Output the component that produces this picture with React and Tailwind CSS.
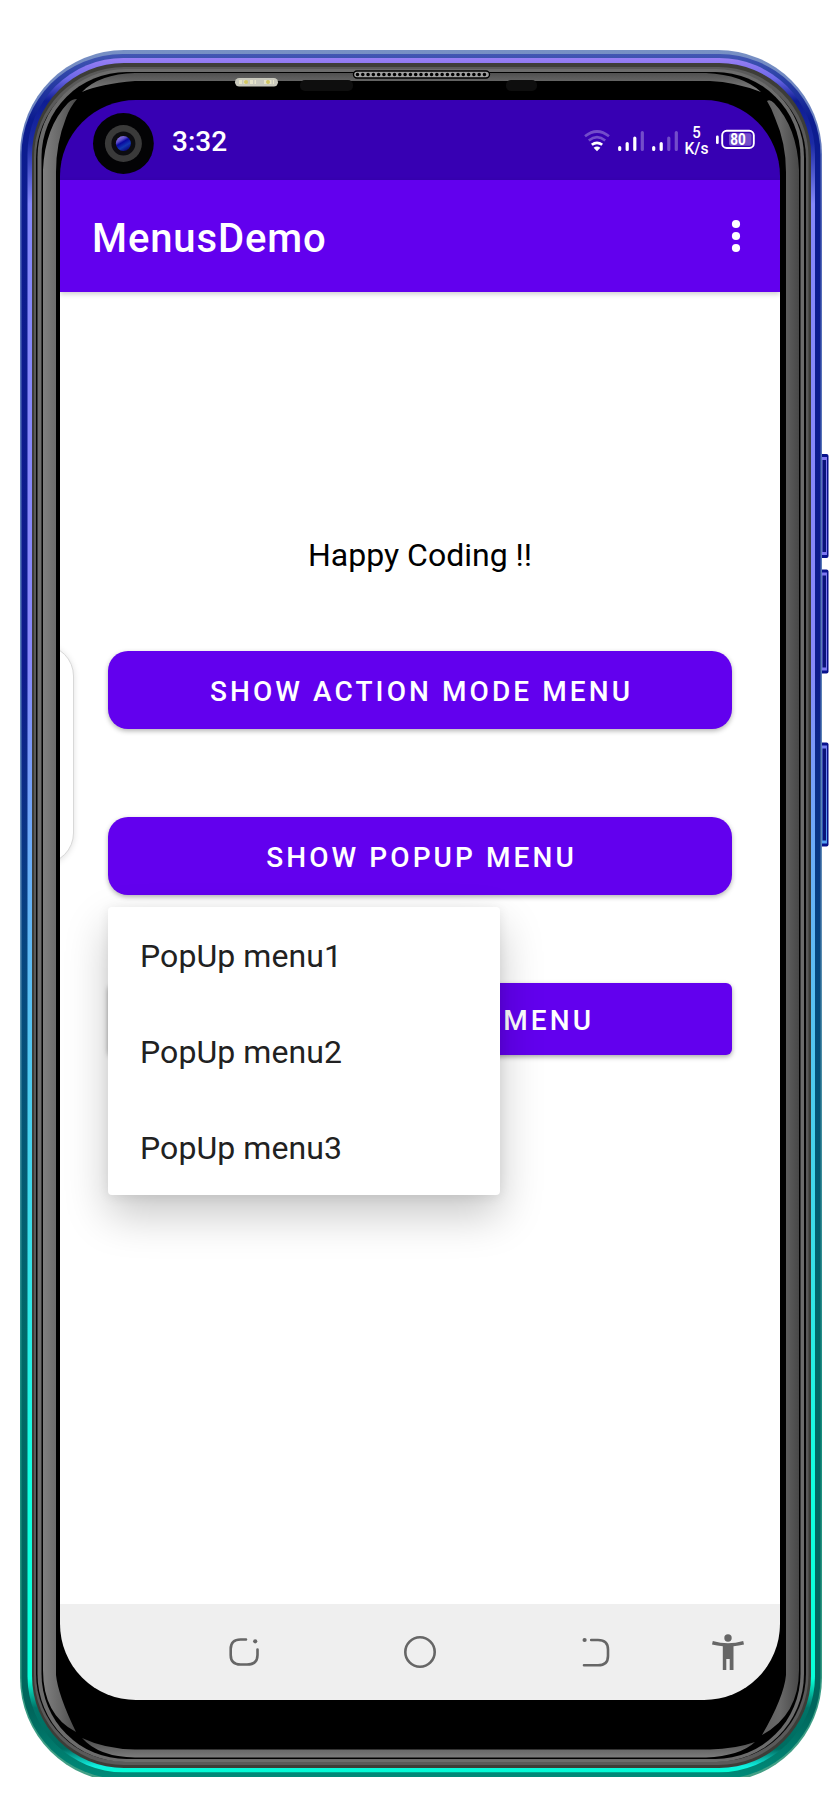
const rings = [
  { l: 20, t: 50, r: 822, b: 1782, rx: 104, fill: 'url(#edge)' },
  { l: 21.5, t: 54, r: 820.5, b: 1779, rx: 101, fill: 'url(#body)' },
  { l: 27.5, t: 58, r: 815, b: 1772.3, rx: 96, fill: 'url(#shine)' },
  { l: 32, t: 63, r: 811, b: 1768, rx: 92, fill: '#3d3d38' },
  { l: 34, t: 67, r: 808.5, b: 1765, rx: 90, fill: '#5a5a5a' },
  { l: 36, t: 71, r: 806, b: 1761.5, rx: 88, fill: '#050505' },
  { l: 37.5, t: 69, r: 804, b: 1762, rx: 88, fill: '#6c6c6c' },
  { l: 41.5, t: 72, r: 800.5, b: 1759, rx: 85, fill: '#000' },
]

function Frame() {
  return (
    <svg className="absolute left-0 top-0" width="840" height="1800" viewBox="0 0 840 1800" aria-hidden="true">
      <defs>
        <linearGradient id="edge" gradientUnits="userSpaceOnUse" x1="0" y1="50" x2="0" y2="1780">
          <stop offset="0" stopColor="#7890c4" />
          <stop offset="0.1" stopColor="#5268b8" />
          <stop offset="0.5" stopColor="#5c8ab4" />
          <stop offset="0.8" stopColor="#148c7c" />
          <stop offset="1" stopColor="#44a086" />
        </linearGradient>
        <linearGradient id="body" gradientUnits="userSpaceOnUse" x1="0" y1="50" x2="0" y2="1780">
          <stop offset="0" stopColor="#4659b5" />
          <stop offset="0.012" stopColor="#3148aa" />
          <stop offset="0.04" stopColor="#0c1c90" />
          <stop offset="0.36" stopColor="#0e1b8c" />
          <stop offset="0.52" stopColor="#064680" />
          <stop offset="0.75" stopColor="#006a68" />
          <stop offset="0.96" stopColor="#00665c" />
          <stop offset="1" stopColor="#008c7a" />
        </linearGradient>
        <linearGradient id="shine" gradientUnits="userSpaceOnUse" x1="0" y1="58" x2="0" y2="1773">
          <stop offset="0" stopColor="#9a80f5" />
          <stop offset="0.012" stopColor="#6c68e8" />
          <stop offset="0.025" stopColor="#0e1d94" />
          <stop offset="0.05" stopColor="#1c2ba5" />
          <stop offset="0.085" stopColor="#8488fa" />
          <stop offset="0.35" stopColor="#8888fa" />
          <stop offset="0.46" stopColor="#6cacf8" />
          <stop offset="0.7" stopColor="#38e0e8" />
          <stop offset="0.83" stopColor="#12ffe0" />
          <stop offset="0.945" stopColor="#08ffd8" />
          <stop offset="0.962" stopColor="#007468" />
          <stop offset="0.986" stopColor="#006c60" />
          <stop offset="0.996" stopColor="#10efe0" />
          <stop offset="1" stopColor="#00ffd0" />
        </linearGradient>
        <linearGradient id="gl" x1="0" x2="1">
          <stop offset="0" stopColor="#808080" />
          <stop offset="0.5" stopColor="#686868" />
          <stop offset="1" stopColor="#484848" />
        </linearGradient>
        <linearGradient id="gr" x1="1" x2="0">
          <stop offset="0" stopColor="#484848" />
          <stop offset="0.5" stopColor="#686868" />
          <stop offset="1" stopColor="#606060" />
        </linearGradient>
        <linearGradient id="gt" x1="0" x2="0" y1="0" y2="1">
          <stop offset="0" stopColor="#505050" />
          <stop offset="1" stopColor="#808080" />
        </linearGradient>
        <linearGradient id="gb" x1="0" x2="0" y1="1" y2="0">
          <stop offset="0" stopColor="#7c7c7c" />
          <stop offset="1" stopColor="#484848" />
        </linearGradient>
        <linearGradient id="key" gradientUnits="userSpaceOnUse" x1="0" y1="454" x2="0" y2="848">
          <stop offset="0" stopColor="#8078f0" />
          <stop offset="0.7" stopColor="#7878f0" />
          <stop offset="1" stopColor="#50a0f0" />
        </linearGradient>
        <linearGradient id="lens" x1="0" x2="0.6" y1="0" y2="1">
          <stop offset="0" stopColor="#a68fe8" />
          <stop offset="0.35" stopColor="#5c4cc8" />
          <stop offset="0.5" stopColor="#0808a0" />
          <stop offset="0.75" stopColor="#1238b0" />
          <stop offset="1" stopColor="#0a0a80" />
        </linearGradient>
        <clipPath id="cut"><rect x="0" y="50" width="840" height="1727" /></clipPath>
      </defs>

      {[454, 569.5, 742.5].map((y) => (
        <g key={y}>
          <rect x="820" y={y} width="8.5" height="104" rx="2" fill="#08128c" />
          <rect x="822" y={y + 3} width="5" height="98" fill="url(#key)" />
          <rect x="822.5" y={y + 6} width="3.5" height="92" fill="#0a1478" />
        </g>
      ))}

      <g clipPath="url(#cut)">
        {rings.map((s, i) => (
          <rect key={i} x={s.l} y={s.t} width={s.r - s.l} height={s.b - s.t} rx={s.rx} fill={s.fill} />
        ))}
      </g>

      <path d="M43 170Q45 127 68 103Q72 99 77 99Q70 107 66 118Q56 143 56 172V1675Q58 1695 76 1732Q43 1715 43 1670Z" fill="url(#gl)" />
      <path d="M799 170Q797 127 774 103Q770 99 767 101Q772 109 775 118Q786 143 786 172V1675Q784 1697 762 1735Q799 1715 799 1670Z" fill="url(#gr)" />
      <path d="M82 92Q99 74 135 73H706Q743 75 761 92Q735 82 710 81H135Q100 84 82 92Z" fill="url(#gt)" />
      <path d="M82 1738Q99 1757 135 1757.500H706Q740 1756 755 1742Q735 1749 710 1749.500H135Q105 1749 82 1738Z" fill="url(#gb)" />

      <rect x="300" y="80" width="53" height="11" rx="5" fill="#0e0e0e" />
      <rect x="506" y="80" width="31" height="11" rx="5" fill="#0e0e0e" />
      <rect x="353.500" y="71" width="136" height="7" rx="3.500" fill="#a0a0a0" stroke="#000" strokeWidth="1.400" />
      <path d="M357.500 74.500H487" stroke="#000" strokeWidth="3.600" strokeLinecap="round" strokeDasharray="0 5.290" />
      <rect x="235" y="78" width="43" height="8.500" rx="4.200" fill="#c9c9bd" />
      <path d="M239 82h8m3 0h6m8 0h10" stroke="#e6e4ca" strokeWidth="4" strokeDasharray="3 1.500" />
      <circle cx="246" cy="82" r="2" fill="#d2c764" />
      <circle cx="268" cy="82" r="2" fill="#d2c764" />
    </svg>
  )
}

function Camera() {
  return (
    <svg width="62" height="62" viewBox="0 0 62 62" className="shrink-0">
      <circle cx="31.400" cy="30.500" r="30.400" fill="#030305" />
      <circle cx="31.400" cy="30.500" r="18.500" fill="#3a3a3a" />
      <circle cx="31.400" cy="30.500" r="12" fill="#0c0c10" />
      <circle cx="31.400" cy="30.500" r="7.500" fill="url(#lens)" />
    </svg>
  )
}

function StatusIcons() {
  return (
    <svg width="176" height="40" viewBox="0 0 176 40" className="shrink-0">
      <g fill="none" stroke="#fff" strokeWidth="2.700">
        <path d="M5 16.300Q17 6.700 29 16.300" opacity="0.300" />
        <path d="M8.800 20.500Q17 13.800 25.200 20.500" opacity="0.300" />
        <path d="M11.800 24.800Q17 20.800 22.200 24.800" />
      </g>
      <path d="M13.600 27.700Q17 25.300 20.400 27.700L17 31.200Z" fill="#fff" />
      <g stroke="#fff" strokeWidth="3.200" strokeLinecap="round">
        <path d="M39.700 27.500v2M47.200 23.500v6M54.800 18v11.500M73.700 27.500v2M81.200 23.500v6" />
        <path d="M62.300 12.500v17M88.800 18v11.500M96.300 12.500v17" opacity="0.300" />
      </g>
      <g fill="#fff" fontFamily="Roboto, sans-serif" textAnchor="middle">
        <text x="116.500" y="18" fontSize="16.500" fontWeight="500" textLength="8.500" lengthAdjust="spacingAndGlyphs">5</text>
        <text x="116.500" y="34" fontSize="16.500" fontWeight="500" textLength="24" lengthAdjust="spacingAndGlyphs">K/s</text>
      </g>
      <rect x="136" y="15.500" width="2.700" height="8.500" rx="1.300" fill="#fff" />
      <rect x="142.200" y="10.800" width="31.600" height="17.200" rx="4.500" fill="none" stroke="#fff" strokeWidth="1.900" />
      <rect x="149" y="13.200" width="22.500" height="12.500" rx="2" fill="#fff" opacity="0.300" />
      <text x="158" y="25.300" fontSize="16.500" fontWeight="700" fill="#fff" fontFamily="Roboto, sans-serif" textAnchor="middle" textLength="15.500" lengthAdjust="spacingAndGlyphs">80</text>
    </svg>
  )
}

function PillButton({ children }) {
  return (
    <button className="flex h-[78px] w-full items-center justify-center rounded-[20px] bg-[#6200ee] pl-[3px] pt-1 text-[28px] font-medium tracking-[3.080px] text-white shadow-[0_2px_5px_rgba(0,0,0,0.3)]">
      {children}
    </button>
  )
}

export default function App() {
  return (
    <div className="relative h-[1800px] w-[840px] overflow-hidden bg-white px-[60px] pt-[100px] font-['Roboto',sans-serif]">
      <Frame />
      <div className="relative flex h-[1600px] w-[720px] flex-col overflow-hidden rounded-[76px]">
        <header className="flex h-20 shrink-0 items-center bg-[#3700b3] pl-8 pr-6 pt-2">
          <Camera />
          <span className="mb-1 ml-[18px] text-[28px] font-medium leading-8 text-white">3:32</span>
          <div className="mb-2 ml-auto flex">
            <StatusIcons />
          </div>
        </header>
        <div className="z-10 flex h-28 shrink-0 items-center justify-between bg-[#6200ee] pl-8 pr-[38px] pt-1 shadow-[0_2px_5px_rgba(0,0,0,0.2)]">
          <h1 className="pt-0.5 text-[40px] font-medium leading-none tracking-[0.900px] text-white">MenusDemo</h1>
          <svg width="12" height="36" viewBox="0 0 12 36" fill="#fff" className="mb-1">
            <circle cx="6" cy="6" r="4.100" />
            <circle cx="6" cy="18" r="4.100" />
            <circle cx="6" cy="30" r="4.100" />
          </svg>
        </div>

        <main className="relative flex flex-1 flex-col bg-white px-12 pt-[243px]">
          <div className="absolute -left-12 top-[353px] h-[219px] w-[62px] rounded-[34px] border border-[#d8d8d8] bg-white shadow-[0_1px_6px_rgba(0,0,0,0.13)]" />
          <p className="mb-[76px] text-center text-[32px] leading-10 text-black">Happy Coding !!</p>
          <PillButton>SHOW ACTION MODE MENU</PillButton>
          <div className="relative my-[88px]">
            <PillButton>SHOW POPUP MENU</PillButton>
            <ul className="absolute left-0 top-[90px] z-10 w-[392px] rounded bg-white text-[32px] tracking-[0.080px] text-[#212121] shadow-[0_20px_44px_rgba(0,0,0,0.22),0_2px_12px_rgba(0,0,0,0.08)]">
              <li className="flex h-24 items-center px-8 pt-0.5">PopUp menu1</li>
              <li className="flex h-24 items-center px-8 pt-0.5">PopUp menu2</li>
              <li className="flex h-24 items-center px-8 pt-0.5">PopUp menu3</li>
            </ul>
          </div>
          <button className="flex h-[72px] w-full items-center justify-center rounded-md bg-[#6200ee] pr-0.5 pt-1 text-[28px] font-medium tracking-[3.120px] text-white shadow-[0_2px_5px_rgba(0,0,0,0.35)]">
            SHOW CONTEXT MENU
          </button>
        </main>

        <nav className="flex h-24 shrink-0 items-center bg-[#efefef] pl-[168px] text-[#666]">
          <svg width="32" height="32" viewBox="0 0 32 32" fill="none" stroke="currentColor" strokeWidth="2.600" strokeLinecap="round">
            <path d="M18 3.500H12.500Q2.700 3.500 2.700 13V19Q2.700 28.500 12.500 28.500H19Q29.500 28.500 29.500 19V13.500" />
            <circle cx="27.200" cy="5.300" r="2.100" fill="currentColor" stroke="none" />
          </svg>
          <svg width="34" height="34" viewBox="0 0 34 34" fill="none" stroke="currentColor" strokeWidth="2.600" className="ml-[143px]">
            <circle cx="17" cy="17" r="14.700" />
          </svg>
          <svg width="32" height="32" viewBox="0 0 32 32" fill="none" stroke="currentColor" strokeWidth="2.600" strokeLinecap="round" className="ml-[143px]">
            <path d="M11.200 4H18Q28 4 28 13.500V20Q28 29.300 18 29.300H4" />
            <circle cx="4.600" cy="4" r="2.100" fill="currentColor" stroke="none" />
          </svg>
          <svg width="32" height="38" viewBox="0 0 32 38" fill="currentColor" className="ml-[100px]">
            <circle cx="16" cy="5" r="3.700" />
            <path d="M.8 8Q16 12.500 31.200 8L32 11.500Q27 12.700 21.500 13.300V37H17.700V26H14.300V37H10.800V13.300Q5 12.700 0 11.500Z" />
          </svg>
        </nav>
      </div>
    </div>
  )
}
